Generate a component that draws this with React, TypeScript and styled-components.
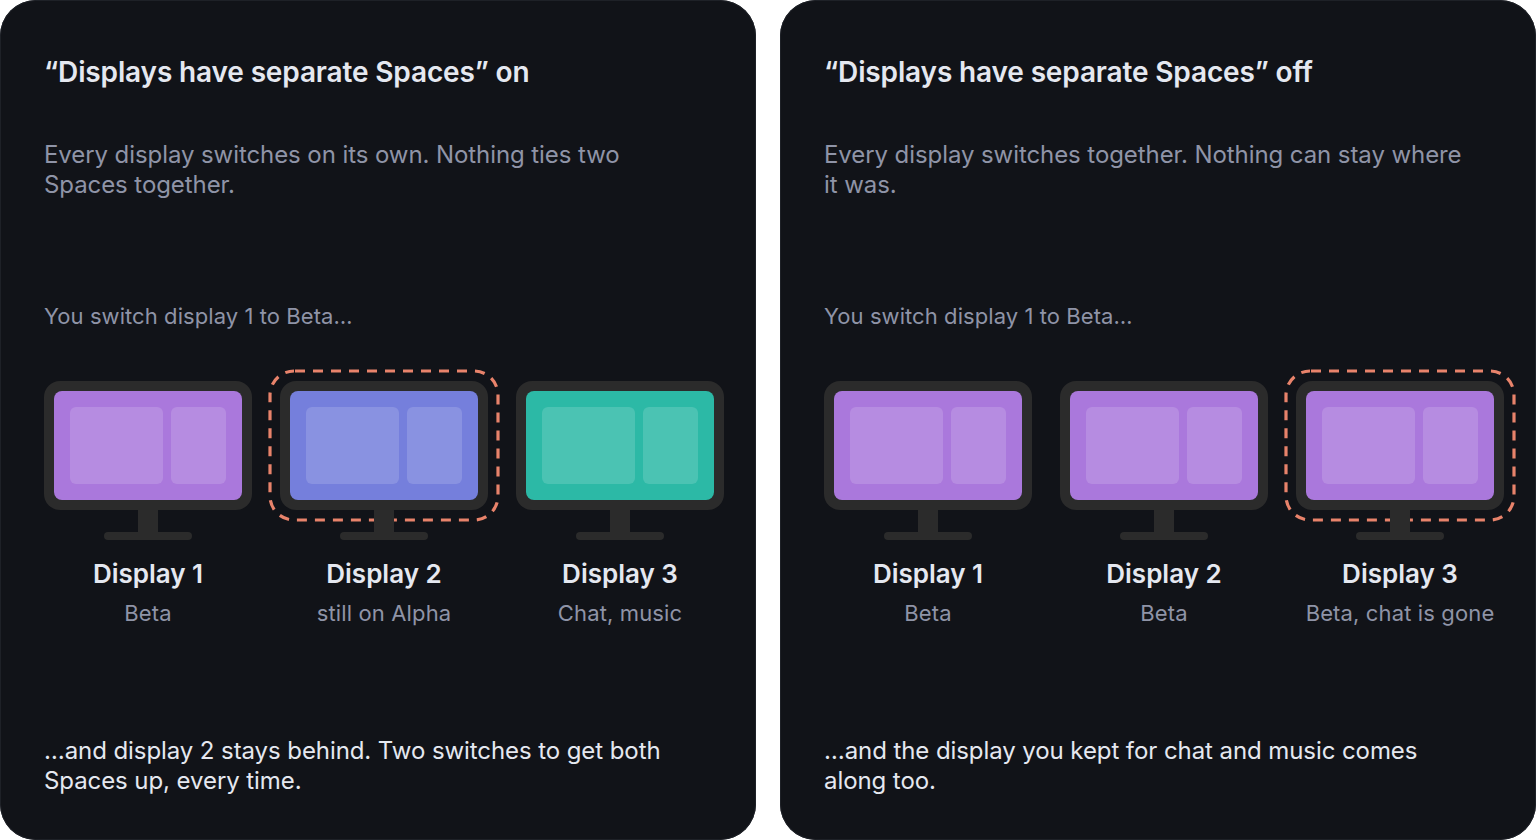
import styled, { createGlobalStyle } from 'styled-components'

const GlobalStyle = createGlobalStyle`
  html, body {
    margin: 0;
    padding: 0;
    background: #ffffff;
  }
  body {
    font-family: Inter, "Liberation Sans", sans-serif;
    -webkit-font-smoothing: antialiased;
  }
`

const Page = styled.div`
  width: 1536px;
  height: 840px;
  display: grid;
  grid-template-columns: 756px 756px;
  column-gap: 24px;
`

const Card = styled.section`
  box-sizing: border-box;
  height: 840px;
  padding: 56px 32px 44px 44px;
  background: #111318;
  border-radius: 36px;
  box-shadow: inset 0 0 0 1px #1e2127;
  display: flex;
  flex-direction: column;
`

const Title = styled.h2`
  margin: 0;
  height: 32px;
  font-size: 28px;
  line-height: 32px;
  font-weight: 600;
  letter-spacing: -0.14px;
  color: #e5e8f0;
`

const Lead = styled.p`
  margin: 52px 0 0;
  max-width: 650px;
  font-size: 24px;
  line-height: 30px;
  letter-spacing: -0.08px;
  color: #8f94a7;
`

const Step = styled.p`
  margin: 101px 0 0;
  font-size: 22px;
  line-height: 30px;
  letter-spacing: 0.07px;
  color: #8f94a7;
`

const DisplayRow = styled.div`
  margin-top: 50px;
  display: grid;
  grid-template-columns: repeat(3, 208px);
  column-gap: 28px;
`

const DisplayItem = styled.div`
  display: flex;
  flex-direction: column;
  align-items: center;
`

const Monitor = styled.div`
  position: relative;
  width: 208px;
  display: flex;
  flex-direction: column;
  align-items: center;
`

const Bezel = styled.div`
  box-sizing: border-box;
  width: 208px;
  height: 129px;
  padding: 10px;
  background: #2b2b2b;
  border-radius: 16px;
`

const Screen = styled.div<{ $color: string }>`
  box-sizing: border-box;
  height: 109px;
  padding: 16px;
  display: grid;
  grid-template-columns: 93px 55px;
  column-gap: 8px;
  background: ${({ $color }) => $color};
  border-radius: 8px;
`

const Pane = styled.div`
  background: rgba(255, 255, 255, 0.15);
  border-radius: 6px;
`

const Neck = styled.div`
  position: relative;
  width: 20px;
  height: 22px;
  background: #2b2b2b;
`

const Foot = styled.div`
  width: 88px;
  height: 8px;
  background: #2b2b2b;
  border-radius: 4px;
`

const Ring = styled.svg`
  position: absolute;
  left: -12px;
  top: -12px;
  overflow: visible;
`

const Name = styled.div`
  margin-top: 18px;
  font-size: 26px;
  line-height: 32px;
  font-weight: 600;
  color: #e5e8f0;
`

const Note = styled.div`
  margin-top: 9px;
  font-size: 22px;
  line-height: 28px;
  letter-spacing: 0.13px;
  color: #8f94a7;
  white-space: nowrap;
`

const Outcome = styled.p`
  margin: auto 0 0;
  max-width: 650px;
  font-size: 24px;
  line-height: 30px;
  letter-spacing: -0.08px;
  color: #e5e8f0;
`

const purple = '#aa78dc'
const blue = '#757fdc'
const green = '#2cb9a6'

type DisplayInfo = {
  name: string
  note: string
  color: string
  ring?: boolean
}

type Scenario = {
  title: string
  lead: string
  outcome: string
  displays: DisplayInfo[]
}

const scenarios: Scenario[] = [
  {
    title: '“Displays have separate Spaces” on',
    lead: 'Every display switches on its own. Nothing ties two Spaces together.',
    outcome: '…and display 2 stays behind. Two switches to get both Spaces up, every time.',
    displays: [
      { name: 'Display 1', note: 'Beta', color: purple },
      { name: 'Display 2', note: 'still on Alpha', color: blue, ring: true },
      { name: 'Display 3', note: 'Chat, music', color: green }
    ]
  },
  {
    title: '“Displays have separate Spaces” off',
    lead: 'Every display switches together. Nothing can stay where it was.',
    outcome: '…and the display you kept for chat and music comes along too.',
    displays: [
      { name: 'Display 1', note: 'Beta', color: purple },
      { name: 'Display 2', note: 'Beta', color: purple },
      { name: 'Display 3', note: 'Beta, chat is gone', color: purple, ring: true }
    ]
  }
]

function Display({ name, note, color, ring }: DisplayInfo) {
  return (
    <DisplayItem>
      <Monitor>
        {ring && (
          <Ring width="232" height="152" viewBox="0 0 232 152">
            <rect
              x="2"
              y="2"
              width="228"
              height="149"
              rx="24"
              fill="none"
              stroke="#e8836b"
              strokeWidth="3.2"
              strokeDasharray="10 8"
              strokeDashoffset="-1"
            />
          </Ring>
        )}
        <Bezel>
          <Screen $color={color}>
            <Pane />
            <Pane />
          </Screen>
        </Bezel>
        <Neck />
        <Foot />
      </Monitor>
      <Name>{name}</Name>
      <Note>{note}</Note>
    </DisplayItem>
  )
}

export default function App() {
  return (
    <>
      <GlobalStyle />
      <Page>
        {scenarios.map((item) => (
          <Card key={item.title}>
            <Title>{item.title}</Title>
            <Lead>{item.lead}</Lead>
            <Step>You switch display 1 to Beta…</Step>
            <DisplayRow>
              {item.displays.map((display) => (
                <Display key={display.name} {...display} />
              ))}
            </DisplayRow>
            <Outcome>{item.outcome}</Outcome>
          </Card>
        ))}
      </Page>
    </>
  )
}
